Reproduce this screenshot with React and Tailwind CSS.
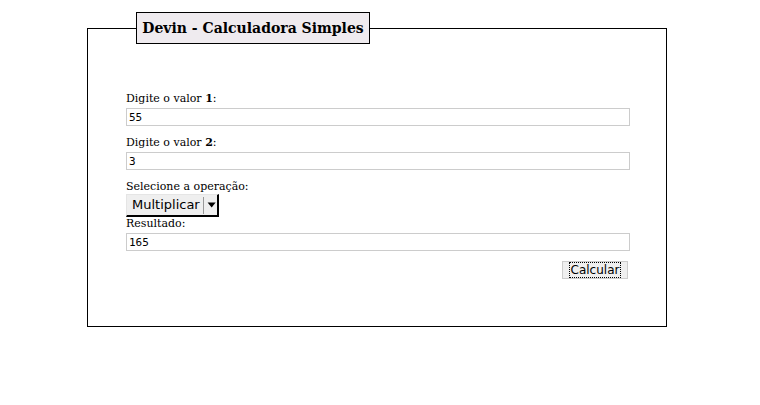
import { useState } from "react";

const serif = { fontFamily: '"DejaVu Serif", "Liberation Serif", serif' };

const Field = ({ children, value, mt = "mt-[10px]" }) => (
  <div className={mt}>
    <div className="h-[14px] text-[11px] leading-[14px] text-black mb-[2px]" style={serif}>
      {children}
    </div>
    <input
      type="text"
      readOnly
      value={value}
      className="block w-[504px] h-[18px] border border-[#cccccc] px-[2px] text-[11px] leading-[16px] text-black outline-none font-['DejaVu_Sans_Mono',monospace]"
    />
  </div>
);

export default function App() {
  const [op] = useState("Multiplicar");

  return (
    <div className="w-[760px] h-[405px] bg-white pl-[87px] pt-[28px]">
      <div className="relative w-[580px] h-[299px] border border-black pl-[38px] pt-[63px]">
        <div
          className="absolute left-[48px] top-[-17px] w-[234px] h-[32px] border border-black bg-[#efebef] flex items-center justify-center text-[14px] font-bold text-black"
          style={serif}
        >
          Devin - Calculadora Simples
        </div>

        <Field value="55" mt="mt-0">
          Digite o valor <b>1</b>:
        </Field>
        <Field value="3">
          Digite o valor <b>2</b>:
        </Field>

        <div className="mt-[10px]">
          <div className="h-[14px] text-[11px] leading-[14px] text-black" style={serif}>
            Selecione a operação:
          </div>
          <div className="flex items-center w-[93px] h-[23px] bg-[#efefef] border-t border-l border-[#e5e5e5] border-r-2 border-b-2 border-r-black border-b-black font-['DejaVu_Sans',sans-serif] text-[13px] text-black">
            <span className="pl-[5px] pr-[3px]">{op}</span>
            <span className="h-[17px] border-l border-[#999999]"></span>
            <svg width="14" height="10" viewBox="0 0 14 10" className="ml-[2px]">
              <path d="M2 2 L12 2 L7 8 Z" fill="black" />
            </svg>
          </div>
        </div>

        <Field value="165" mt="mt-0">
          Resultado:
        </Field>

        <div className="w-[504px] flex justify-end mt-[10px]">
          <button className="mr-[2px] w-[66px] h-[18px] bg-[#efefef] border border-[#cccccc] flex items-center justify-center font-['DejaVu_Sans',sans-serif] text-[12px] text-black">
            <span className="outline-1 outline-dotted outline-black leading-[14px] px-[1px]">Calcular</span>
          </button>
        </div>
      </div>
    </div>
  );
}
